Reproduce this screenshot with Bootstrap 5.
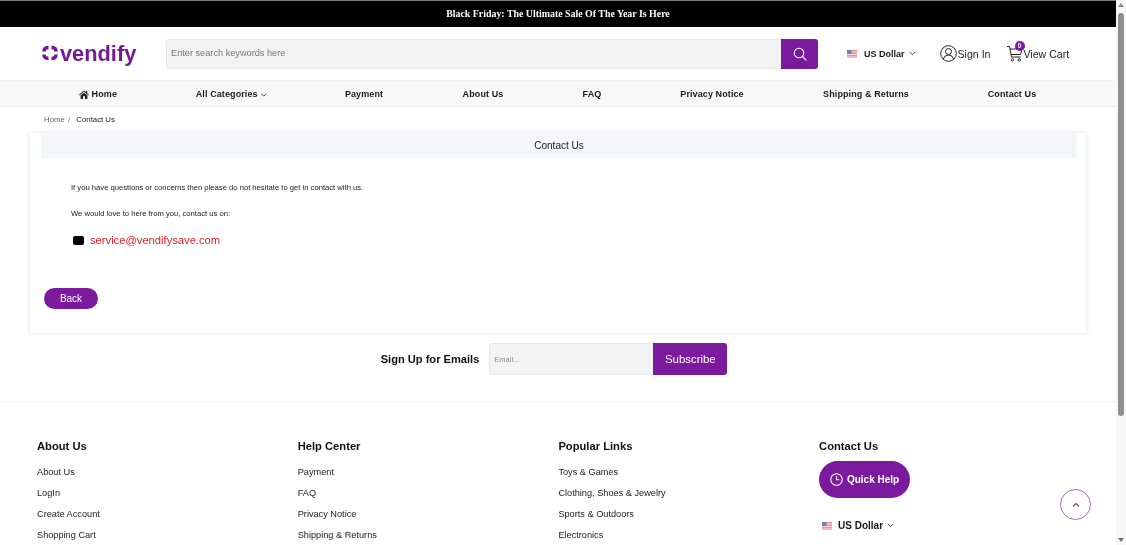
<!DOCTYPE html>
<html lang="en">
<head>
<meta charset="utf-8">
<title>Contact Us</title>
<link href="https://cdn.jsdelivr.net/npm/bootstrap@5.3.3/dist/css/bootstrap.min.css" rel="stylesheet">
<style>
html, body { height: 545px; overflow: hidden; }
body { font-family: "Liberation Sans", Arial, sans-serif; color: #111; background: #fff; font-size: 12px; }
a { color: inherit; text-decoration: none; }
.shop-page { width: 1116px; height: 545px; overflow: hidden; flex: none; position: relative; will-change: transform; }
.promo-bar { background: #000; color: #fff; height: 27px; border-top: 1px solid #777; font-family: "Liberation Serif", serif; font-weight: 700; font-size: 9.9px; line-height: 26px; text-align: center; }
.site-head { height: 53px; padding-left: 41px; }
.logo-box { width: 125px; color: #751a96; font-size: 21.8px; font-weight: 700; line-height: 1; }
.logo-box svg { margin-right: 1px; }
.search-box { width: 652px; height: 30px; }
.search-box input, .mail-box input { background: #f3f3f3; border: 1px solid #e6e6e6; border-right: 0; border-radius: 3px 0 0 3px; font-size: 9.2px; color: #555; padding: 1px 4px 0; flex: 1; min-width: 0; outline: 0; }
.search-box input::placeholder { color: #757575; opacity: 1; }
.mail-box input::placeholder { color: #8a8a8a; opacity: 1; font-size: 7.5px; }
.search-go { width: 37px; background: #7b1a9c; border-radius: 0 3px 3px 0; }
.money-pick { font-weight: 700; font-size: 9px; color: #1a1a1a; }
.head-text { padding-top: 2px; }
.head-link { font-size: 10.6px; color: #222; }
.cart-count { position: absolute; left: 9px; top: -4px; width: 10px; height: 10px; border-radius: 50%; background: #7b1a9c; color: #fff; font-size: 6.5px; font-weight: 700; line-height: 10px; text-align: center; }
.menu-bar { height: 27px; background: #f8f8f8; border-top: 1px solid #f1f1f1; border-bottom: 1px solid #ececec; font-size: 9px; font-weight: 700; color: #1a1a1a; letter-spacing: .1px; }
.menu-cell { position: absolute; top: 0; line-height: 26px; white-space: nowrap; transform: translateX(-50%); }
.crumb-line { height: 26px; padding-left: 44px; font-size: 7.8px; line-height: 25px; color: #222; }
.crumb-line a { color: #666; }
.crumb-line span { margin: 0 4px 0 1px; color: #777; }
.contact-card { margin-left: 30px; width: 1056px; height: 200px; box-shadow: 0 0 5px rgba(0,0,0,.13); padding: 0 9px 0 11px; background: #fff; }
.contact-title { height: 25px; line-height: 25px; background: #f5f6f9; text-align: center; font-size: 10px; color: #222; }
.contact-body { padding: 25px 0 0 30px; font-size: 7.65px; color: #222; }
.contact-body p { margin: 0 0 16px; line-height: 10px; }
.mail-line { color: #ee1c25; font-size: 11.2px; line-height: 16px; margin-left: 2px; margin-top: -3px; }
.mail-dot { width: 11px; height: 9px; background: #000; border-radius: 2px; margin-right: -2px; }
.back-btn { position: relative; display: block; width: 54px; height: 21px; margin: 40px 0 0 -27px; background: #7b1a9c; color: #fff; border-radius: 11px; text-align: center; font-size: 10px; line-height: 21px; }
.signup-row { height: 69px; padding: 10px 8px 0 0; border-bottom: 1px solid #eee; }
.signup-label { font-size: 11.1px; font-weight: 700; margin-right: 10px; }
.mail-box { width: 238px; height: 32px; }
.sub-btn { width: 74px; background: #7b1a9c; color: #fff; border-radius: 0 3px 3px 0; text-align: center; font-size: 11.4px; line-height: 32px; }
.foot-grid { padding: 37px 0 0 37px; }
.foot-col { width: 260.7px; flex: none; }
.foot-col h6 { font-size: 11.2px; font-weight: 700; margin: 0 0 8px; line-height: 15px; color: #111; }
.foot-col a { display: block; font-size: 9.2px; line-height: 21px; color: #222; }
.help-pill { width: 91px; height: 37px; background: #7b1a9c; color: #fff; border-radius: 19px; font-size: 10px; font-weight: 700; }
.to-top { position: absolute; left: 1060px; top: 489px; width: 31px; height: 31px; border: 1px solid #a56cbd; border-radius: 50%; background: #fff; }
.fake-scroll { width: 10px; height: 545px; background: #f7f7f7; position: relative; flex: none; }
.scroll-thumb { position: absolute; left: 2px; top: 13px; width: 6px; height: 403px; background: #8f8f8f; border-radius: 3px; }
.scroll-up { position: absolute; left: 2px; top: 3px; width: 0; height: 0; border: 3px solid transparent; border-top: 0; border-bottom: 4px solid #8a8a8a; }
.scroll-down { position: absolute; left: 2px; bottom: 3px; width: 0; height: 0; border: 3px solid transparent; border-bottom: 0; border-top: 4px solid #6f6f6f; }
</style>
</head>
<body class="d-flex">
<div class="shop-page">
    <div class="promo-bar">Black Friday: The Ultimate Sale Of The Year Is Here</div>

    <header class="site-head d-flex align-items-center">
        <a href="#" class="logo-box d-flex align-items-center">
            <svg width="18" height="16" viewBox="0 0 18 16" fill="none" stroke="#751a96" stroke-width="3.600"><path d="M3 6.500 Q3 2.500 7.500 2.500"/><path d="M10.500 2.500 Q15 2.500 15 6.500"/><path d="M3 9.500 Q3 13.500 7.500 13.500"/><path d="M10.500 13.500 Q15 13.500 15 9.500"/></svg>
            <span>vendify</span>
        </a>
        <form class="search-box d-flex ms-0" onsubmit="return false">
            <input type="text" placeholder="Enter search keywords here">
            <button class="search-go border-0 p-0 d-flex align-items-center justify-content-center" type="button" aria-label="Search">
                <svg width="14" height="14" viewBox="0 0 14 14" fill="none" stroke="#fff" stroke-width="1.1"><circle cx="6" cy="6" r="4.800"/><path d="M9.500 9.500 L13.300 13.300"/></svg>
            </button>
        </form>
        <div class="money-pick d-flex align-items-center" style="margin-left:29px">
            <svg width="10" height="8" viewBox="0 0 10 8"><rect width="10" height="8" fill="#f38a96"/><rect y="1.500" width="10" height="1" fill="#fbe3e5"/><rect y="4" width="10" height="1" fill="#fbe3e5"/><rect y="6.500" width="10" height="1" fill="#fbe3e5"/><rect width="4.500" height="4" fill="#6f7ac0"/></svg>
            <span class="head-text" style="margin-left:7px">US Dollar</span>
            <svg class="ms-1" width="7" height="5" viewBox="0 0 7 5" fill="none" stroke="#444" stroke-width="1"><path d="M.8 1 L3.500 3.700 L6.200 1"/></svg>
        </div>
        <a href="#" class="head-link d-flex align-items-center" style="margin-left:24px">
            <svg width="17" height="17" viewBox="0 0 17 17" fill="none" stroke="#222" stroke-width="1"><circle cx="8.500" cy="8.500" r="7.800"/><circle cx="8.500" cy="6.500" r="3"/><path d="M3.300 14 Q4.500 10 8.500 10 Q12.500 10 13.700 14"/></svg>
            <span class="head-text" style="margin-left:1px">Sign In</span>
        </a>
        <a href="#" class="head-link d-flex align-items-center position-relative" style="margin-left:15px">
            <svg width="18" height="17" viewBox="0 0 17 17" fill="none" stroke="#222" stroke-width="1"><path d="M.5 1.500 H3 L5 12 H14"/><path d="M3.500 4 H15.500 L14 9.500 H4.500"/><circle cx="6" cy="14.800" r="1.200"/><circle cx="12.800" cy="14.800" r="1.200"/></svg>
            <span class="cart-count">0</span>
            <span class="head-text">View Cart</span>
        </a>
    </header>

    <nav class="menu-bar position-relative">
        <a href="#" class="menu-cell" style="left:98px">
            <svg width="10" height="9" viewBox="0 0 10 9" fill="#222"><path d="M5 .5 L7 2.200 V1 H8.200 V3.200 L10 4.800 L9.400 5.400 L5 1.800 L.6 5.400 L0 4.800 Z"/><path d="M1.600 5.400 L5 2.700 L8.400 5.400 V9 H6 V6.300 H4 V9 H1.600 Z"/></svg>
            Home
        </a>
        <a href="#" class="menu-cell" style="left:231px">All Categories
            <svg width="6" height="4" viewBox="0 0 6 4" fill="none" stroke="#444" stroke-width="1"><path d="M.5 .7 L3 3.200 L5.500 .7"/></svg>
        </a>
        <a href="#" class="menu-cell" style="left:364px">Payment</a>
        <a href="#" class="menu-cell" style="left:483px">About Us</a>
        <a href="#" class="menu-cell" style="left:592px">FAQ</a>
        <a href="#" class="menu-cell" style="left:712px">Privacy Notice</a>
        <a href="#" class="menu-cell" style="left:866px">Shipping &amp; Returns</a>
        <a href="#" class="menu-cell" style="left:1012px">Contact Us</a>
    </nav>

    <div class="crumb-line"><a href="#">Home</a> <span>/</span> Contact Us</div>

    <section class="contact-card">
        <div class="contact-title">Contact Us</div>
        <div class="contact-body">
            <p>If you have questions or concerns then please do not hesitate to get in contact with us.</p>
            <p>We would love to here from you, contact us on:</p>
            <div class="mail-line d-flex align-items-center gap-2">
                <span class="mail-dot"></span>
                <a href="#">service@vendifysave.com</a>
            </div>
            <a href="#" class="back-btn">Back</a>
        </div>
    </section>

    <div class="signup-row d-flex justify-content-center">
        <div class="d-flex align-items-center" style="height:32px">
            <span class="signup-label">Sign Up for Emails</span>
            <form class="mail-box d-flex" onsubmit="return false">
                <input type="text" placeholder="Email...">
                <span class="sub-btn">Subscribe</span>
            </form>
        </div>
    </div>

    <footer class="foot-grid d-flex">
        <div class="foot-col">
            <h6>About Us</h6>
            <a href="#">About Us</a>
            <a href="#">LogIn</a>
            <a href="#">Create Account</a>
            <a href="#">Shopping Cart</a>
        </div>
        <div class="foot-col">
            <h6>Help Center</h6>
            <a href="#">Payment</a>
            <a href="#">FAQ</a>
            <a href="#">Privacy Notice</a>
            <a href="#">Shipping &amp; Returns</a>
        </div>
        <div class="foot-col">
            <h6>Popular Links</h6>
            <a href="#">Toys &amp; Games</a>
            <a href="#">Clothing, Shoes &amp; Jewelry</a>
            <a href="#">Sports &amp; Outdoors</a>
            <a href="#">Electronics</a>
        </div>
        <div class="foot-col">
            <h6 style="margin-bottom:7px">Contact Us</h6>
            <div class="help-pill d-flex align-items-center justify-content-center gap-1">
                <svg width="13" height="13" viewBox="0 0 12 12" fill="none" stroke="#fff" stroke-width="1"><circle cx="6" cy="6" r="5.300"/><path d="M6 3 V6.300 H8.500"/></svg>
                <span>Quick Help</span>
            </div>
            <div class="money-pick d-flex align-items-center" style="margin:20px 0 0 3px;font-size:10px">
                <svg width="10" height="8" viewBox="0 0 10 8"><rect width="10" height="8" fill="#f38a96"/><rect y="1.500" width="10" height="1" fill="#fbe3e5"/><rect y="4" width="10" height="1" fill="#fbe3e5"/><rect y="6.500" width="10" height="1" fill="#fbe3e5"/><rect width="4.500" height="4" fill="#6f7ac0"/></svg>
                <span style="margin-left:6px">US Dollar</span>
                <svg class="ms-1" width="7" height="5" viewBox="0 0 7 5" fill="none" stroke="#444" stroke-width="1"><path d="M.8 1 L3.500 3.700 L6.200 1"/></svg>
            </div>
        </div>
    </footer>

    <a href="#" class="to-top d-flex align-items-center justify-content-center" aria-label="Back to top">
        <svg width="8" height="6" viewBox="0 0 8 6" fill="none" stroke="#7b3f94" stroke-width="1.200"><path d="M1 4.500 L4 1.500 L7 4.500"/></svg>
    </a>
</div>
<div class="fake-scroll"><span class="scroll-up"></span><span class="scroll-thumb"></span><span class="scroll-down"></span></div>
</body>
</html>
